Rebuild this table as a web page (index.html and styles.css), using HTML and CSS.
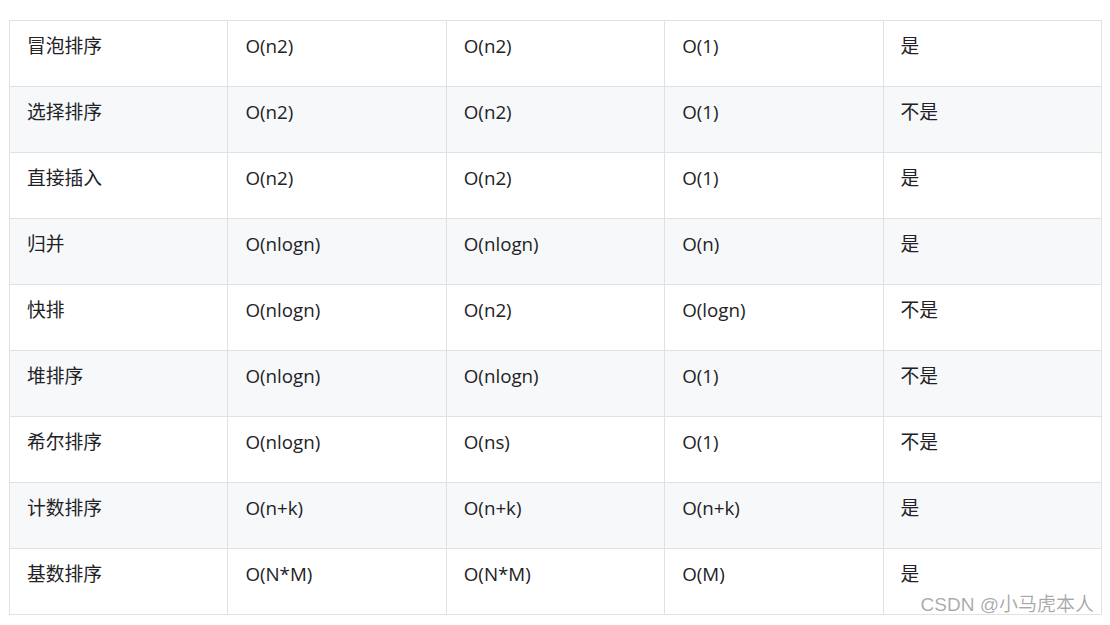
FILE: index.html
```html
<!DOCTYPE html>
<html lang="zh">
<head>
<meta charset="utf-8">
<link rel="stylesheet" href="styles.css">
</head>
<body>
<div class="wrap">
<table class="sort-table">
<tbody>
<tr><td>冒泡排序</td><td>O(n2)</td><td>O(n2)</td><td>O(1)</td><td>是</td></tr>
<tr><td>选择排序</td><td>O(n2)</td><td>O(n2)</td><td>O(1)</td><td>不是</td></tr>
<tr><td>直接插入</td><td>O(n2)</td><td>O(n2)</td><td>O(1)</td><td>是</td></tr>
<tr><td>归并</td><td>O(nlogn)</td><td>O(nlogn)</td><td>O(n)</td><td>是</td></tr>
<tr><td>快排</td><td>O(nlogn)</td><td>O(n2)</td><td>O(logn)</td><td>不是</td></tr>
<tr><td>堆排序</td><td>O(nlogn)</td><td>O(nlogn)</td><td>O(1)</td><td>不是</td></tr>
<tr><td>希尔排序</td><td>O(nlogn)</td><td>O(ns)</td><td>O(1)</td><td>不是</td></tr>
<tr><td>计数排序</td><td>O(n+k)</td><td>O(n+k)</td><td>O(n+k)</td><td>是</td></tr>
<tr><td>基数排序</td><td>O(N*M)</td><td>O(N*M)</td><td>O(M)</td><td>是</td></tr>
</tbody>
</table>
<div class="watermark">CSDN @小马虎本人</div>
</div>
</body>
</html>
```
FILE: styles.css
```css
html, body {
  margin: 0;
  padding: 0;
  background: #ffffff;
}
.wrap {
  position: relative;
  padding: 20px 0 0 9px;
  width: 1093px;
}
.sort-table {
  border-collapse: collapse;
  table-layout: fixed;
  width: 1093px;
  font-family: "Open Sans", "Noto Sans CJK SC", sans-serif;
  font-size: 18.75px;
  color: #222226;
}
.sort-table td {
  border: 1px solid #dfe2e5;
  height: 66px;
  padding: 13px 0 0 17px;
  line-height: 24px;
  vertical-align: top;
  box-sizing: border-box;
}
.sort-table tr:nth-child(even) td {
  background: #f6f8fa;
}
.watermark {
  position: absolute;
  right: 8px;
  top: 593px;
  line-height: 24px;
  font-family: "Liberation Sans", "Noto Sans CJK SC", sans-serif;
  font-size: 19px;
  color: rgba(0, 0, 0, 0.35);
  white-space: nowrap;
}
```
